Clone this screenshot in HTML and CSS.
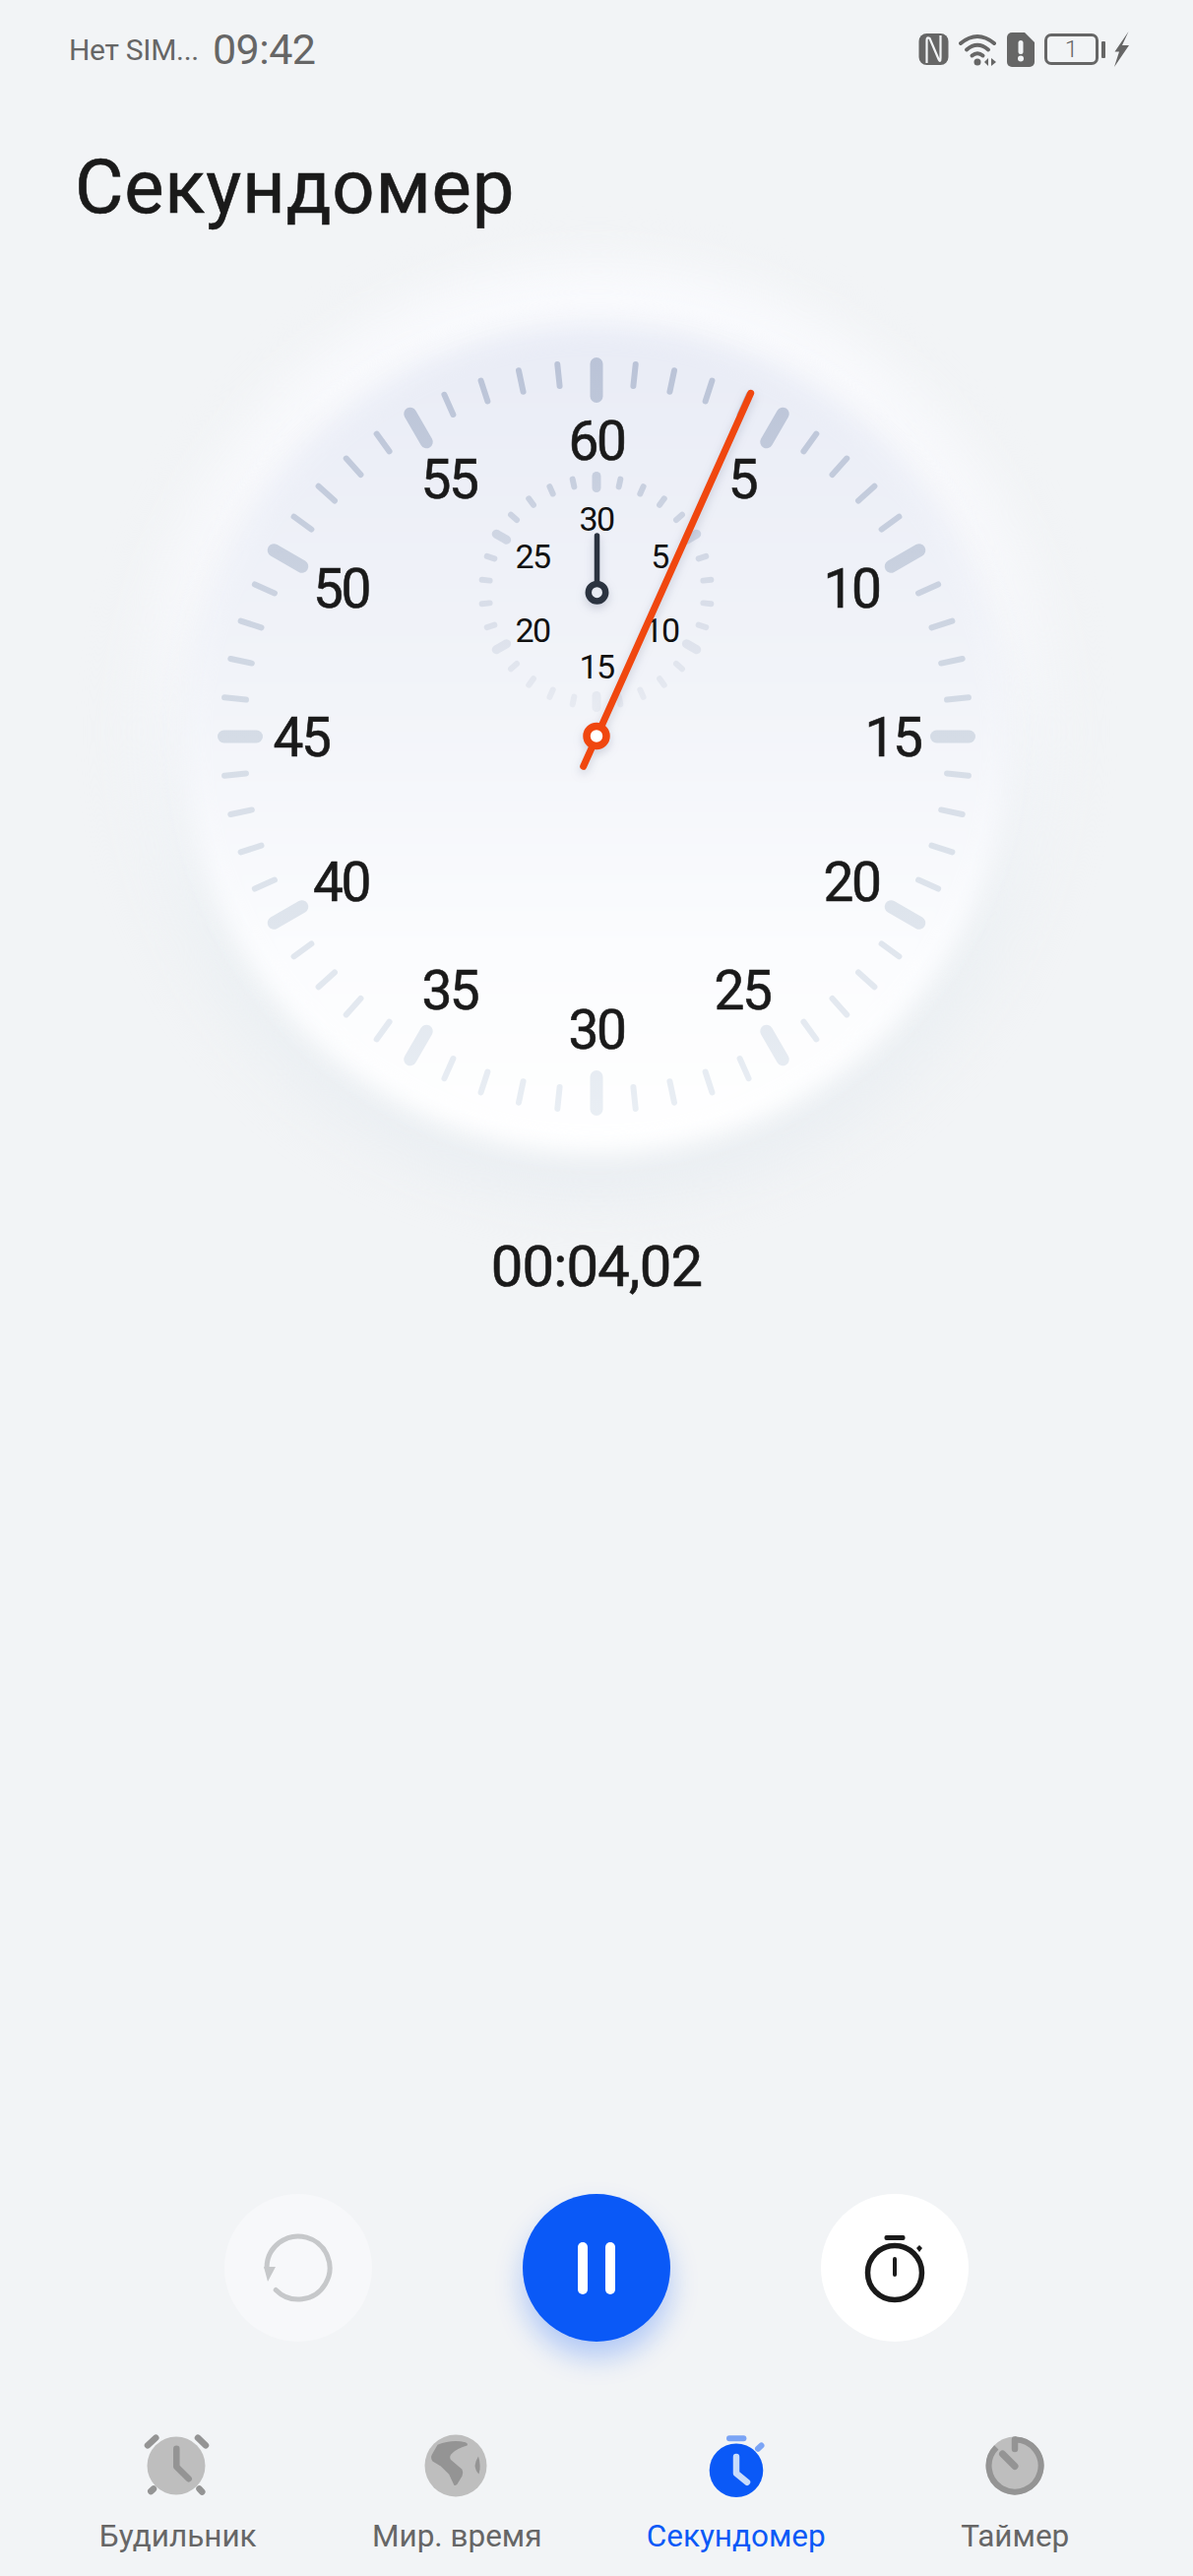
FILE: index.html
```html
<!DOCTYPE html>
<html lang="ru">
<head>
    <meta charset="UTF-8">
    <meta name="viewport" content="width=device-width, initial-scale=1.0">
    <title>Секундомер</title>
    <link rel="stylesheet" href="styles.css">
</head>
<body>
    <header class="status-bar">
        <div class="status-left">
            <span class="carrier">Нет SIM...</span>
            <span class="clock">09:42</span>
        </div>
        <div class="status-right">
            <svg class="icon-nfc" width="31" height="32" viewBox="0 0 30 32">
                <rect width="30" height="32" rx="8" fill="#666"/>
                <path d="M8 30V7Q8 3 11 5L20 26Q22 30 22 25V2" fill="none" stroke="#f2f4f6" stroke-width="2.200"/>
            </svg>
            <svg class="icon-wifi" width="39" height="33" viewBox="0 0 39 33">
                <g fill="none" stroke="#666" stroke-width="4" stroke-linecap="round">
                    <path d="M2 10Q19 -4 36 10"/>
                    <path d="M8 16.500Q19 7 30 16.500"/>
                    <path d="M13.500 22.500Q19 18 24.500 22.500"/>
                </g>
                <circle cx="19" cy="29" r="3.500" fill="#666"/>
                <path d="M26 29L30 25V33ZM33 25L38 29L33 33Z" fill="#666"/>
            </svg>
            <svg class="icon-sim" width="28" height="35" viewBox="0 0 28 35">
                <path d="M5 0H18L28 10V30A5 5 0 0 1 23 35H5A5 5 0 0 1 0 30V5A5 5 0 0 1 5 0Z" fill="#666"/>
                <rect x="11.500" y="8" width="5" height="14" rx="2.500" fill="#f2f4f6"/>
                <circle cx="14" cy="26.500" r="3" fill="#f2f4f6"/>
            </svg>
            <div class="battery">
                <div class="battery-body">1</div>
                <div class="battery-nub"></div>
            </div>
            <svg class="icon-bolt" width="15" height="36" viewBox="0 0 15 36">
                <path d="M14.500 0L8 14H15L0 36L5 20.500H0.500Z" fill="#666"/>
            </svg>
        </div>
    </header>

    <h1 class="page-title">Секундомер</h1>

    <section class="dial">
        <div class="dial-halo"></div>
        <div class="dial-disc"></div>
        <svg class="dial-face" width="840" height="840" viewBox="0 0 840 840">
            <defs>
                <linearGradient id="fade-outer" gradientUnits="userSpaceOnUse" x1="0" y1="35" x2="0" y2="807">
                    <stop offset="0" stop-color="#bac3d7"/>
                    <stop offset="0.5" stop-color="#d5dce6"/>
                    <stop offset="1" stop-color="#e9eef4"/>
                </linearGradient>
                <linearGradient id="fade-inner" gradientUnits="userSpaceOnUse" x1="0" y1="150" x2="0" y2="396">
                    <stop offset="0" stop-color="#c6cede"/>
                    <stop offset="1" stop-color="#e8ebf2"/>
                </linearGradient>
            </defs>

            <g id="ticks-outer" stroke="url(#fade-outer)" stroke-linecap="round"></g>
            <g id="ticks-inner" stroke="url(#fade-inner)" stroke-linecap="round"></g>

            <g class="num-big">
                <text x="420" y="138.500">60</text>
                <text x="568" y="178">5</text>
                <text x="679" y="288.500">10</text>
                <text x="721" y="439.500">15</text>
                <text x="679" y="587">20</text>
                <text x="568" y="697">25</text>
                <text x="420" y="736.500">30</text>
                <text x="270.800" y="697">35</text>
                <text x="160.500" y="587">40</text>
                <text x="120" y="439.500">45</text>
                <text x="160.500" y="288.500">50</text>
                <text x="270" y="178">55</text>
            </g>
            <g class="num-small">
                <text x="420" y="210.500">30</text>
                <text x="484" y="248.500">5</text>
                <text x="486" y="323.500">10</text>
                <text x="420" y="360.500">15</text>
                <text x="355" y="323.500">20</text>
                <text x="355" y="248.500">25</text>
            </g>

            <g class="hand-shadow">
                <line x1="420.500" y1="216" x2="420.500" y2="268" stroke="#2b3340" stroke-width="5.500" stroke-linecap="round"/>
                <circle cx="420.500" cy="273.700" r="8.700" fill="#e8ebf3" stroke="#2b3340" stroke-width="6.500"/>
            </g>
            <g class="hand-shadow">
                <line x1="406.700" y1="450.300" x2="576.700" y2="71.300" stroke="#f0470f" stroke-width="7" stroke-linecap="round"/>
                <circle cx="420" cy="419.500" r="10" fill="#fff" stroke="#f0470f" stroke-width="7.500"/>
            </g>
        </svg>
    </section>

    <div class="elapsed">00:04,02</div>

    <div class="controls">
        <button class="round-btn btn-reset" type="button">
            <svg width="80" height="80" viewBox="0 0 80 80">
                <path d="M17.200 62.500A32 32 0 1 0 8 40" fill="none" stroke="#c6c8ca" stroke-width="5" stroke-linecap="round"/>
                <path d="M5 39H17L9 54Z" fill="#c6c8ca"/>
            </svg>
        </button>
        <button class="round-btn btn-pause" type="button">
            <span class="pause-bar"></span>
            <span class="pause-bar"></span>
        </button>
        <button class="round-btn btn-lap" type="button">
            <svg width="80" height="80" viewBox="0 0 80 80">
                <circle cx="40" cy="45" r="27.500" fill="none" stroke="#1a1a1a" stroke-width="5.500"/>
                <rect x="29.500" y="7" width="21" height="5" rx="2" fill="#1a1a1a"/>
                <rect x="38" y="29" width="4" height="20" rx="2" fill="#1a1a1a"/>
                <path d="M65 17L68 20L65 24L62 20Z" fill="#1a1a1a"/>
            </svg>
        </button>
    </div>

    <nav class="tabs">
        <a class="tab">
            <svg width="72" height="72" viewBox="2 0 72 72">
                <circle cx="36" cy="36" r="29.500" fill="#bebebe"/>
                <g fill="none" stroke="#949494" stroke-width="6.500" stroke-linecap="round" stroke-linejoin="round">
                    <path d="M36.300 18.700V37L48.700 49.300"/>
                    <path d="M7 15.300L15.300 7.700"/>
                    <path d="M58 7.700L66 15.300"/>
                    <path d="M10.300 62L13 59.500"/>
                    <path d="M59.500 59.500L62.300 62.500"/>
                </g>
            </svg>
            <span>Будильник</span>
        </a>
        <a class="tab">
            <svg width="72" height="72" viewBox="1 0 72 72">
                <circle cx="36" cy="36" r="31.500" fill="#bebebe"/>
                <path d="M17.500 14.800Q32 9 45.800 12.200Q49 13.500 47.500 15.500Q38 18 32.500 23.200Q29 26 30.800 29.800L42.500 39.800Q44 43 42.500 46.500L37.500 54.800Q35 57 34.200 55.500L29.200 44.800L20.800 36.500L12.500 31.500Q10 28 11.800 24.800Z" fill="#949494"/>
                <path d="M59 26.500Q56 31 55.500 36Q56 41 59.500 44.500Q62 36 59 26.500Z" fill="#949494"/>
            </svg>
            <span>Мир. время</span>
        </a>
        <a class="tab tab-active">
            <svg width="72" height="72" viewBox="0 0 72 72">
                <circle cx="36" cy="40.700" r="27.300" fill="#0a59f7"/>
                <rect x="26" y="5.300" width="20.400" height="6" rx="3" fill="#7ba4f5"/>
                <path d="M58 18.700L61.500 15.500" fill="none" stroke="#7ba4f5" stroke-width="6" stroke-linecap="round"/>
                <path d="M36 27V43.700L47 52.700" fill="none" stroke="#c8dcfb" stroke-width="6.500" stroke-linecap="round" stroke-linejoin="round"/>
            </svg>
            <span>Секундомер</span>
        </a>
        <a class="tab">
            <svg width="72" height="72" viewBox="0 0 72 72">
                <circle cx="36" cy="36" r="29.500" fill="#bebebe"/>
                <path d="M36 9.500A26.500 26.500 0 1 1 17.300 17.300" fill="none" stroke="#949494" stroke-width="6"/>
                <path d="M36 9.500V19" fill="none" stroke="#949494" stroke-width="6.500" stroke-linecap="round"/>
                <path d="M23.500 24L36 36.500" fill="none" stroke="#949494" stroke-width="7" stroke-linecap="round"/>
            </svg>
            <span>Таймер</span>
        </a>
    </nav>

    <script src="dial.js"></script>
</body>
</html>
```

FILE: styles.css
```css
* {
    box-sizing: border-box;
}

html, body {
    margin: 0;
    padding: 0;
}

body {
    width: 1212px;
    height: 2616px;
    display: flex;
    flex-direction: column;
    overflow: hidden;
    background-color: #f2f4f6;
    color: #1a1a1a;
    font-family: Roboto, "Noto Sans", sans-serif;
}

/* status bar */
.status-bar {
    height: 100px;
    padding: 32px 65px 0 70px;
    display: flex;
    justify-content: space-between;
    align-items: flex-start;
    color: #666;
}

.status-left {
    display: flex;
    align-items: center;
    gap: 14px;
    height: 36px;
}

.carrier {
    font-size: 30px;
    letter-spacing: -0.3px;
}

.clock {
    font-size: 43px;
    letter-spacing: -0.5px;
}

.status-right {
    display: flex;
    align-items: center;
    gap: 10px;
    height: 36px;
}

.battery {
    display: flex;
    align-items: center;
    gap: 3px;
    margin-right: -1px;
}

.battery-body {
    width: 55px;
    height: 32px;
    border: 3px solid #666;
    border-radius: 7px;
    font-size: 24px;
    font-weight: 300;
    line-height: 26px;
    text-align: center;
}

.battery-nub {
    width: 4px;
    height: 17px;
    background-color: #666;
    border-radius: 1px;
}

/* title */
.page-title {
    height: 228px;
    margin: 0;
    padding: 45px 0 0 76px;
    font-size: 76px;
    font-weight: 400;
    line-height: 90px;
    letter-spacing: 0.8px;
    -webkit-text-stroke: 0.6px #1a1a1a;
}

/* dial */
.dial {
    position: relative;
    width: 840px;
    height: 840px;
    margin: 0 auto;
    flex-shrink: 0;
}

.dial-halo {
    position: absolute;
    inset: -62px -52px -52px;
    border-radius: 50%;
    background: linear-gradient(#f9fafd 0%, #f6f7fa 35%, #ecf0f3 75%, #eaeef2 100%);
    filter: blur(24px);
}

.dial-disc {
    position: absolute;
    inset: 2px 0 -4px;
    border-radius: 50%;
    background: linear-gradient(#e9ecf6 0%, #f2f4f9 45%, #fbfcfe 75%, #fff 100%);
    filter: blur(12px);
}

.dial-face {
    position: absolute;
    top: 0;
    left: 0;
}

.num-big text,
.num-small text {
    text-anchor: middle;
    fill: #1a1a1a;
}

.num-big text {
    font-size: 55px;
    letter-spacing: -2.500px;
    stroke: #1a1a1a;
    stroke-width: 0.6px;
}

.num-small text {
    font-size: 34px;
    letter-spacing: -1.500px;
    fill: #111;
}

.hand-shadow {
    filter: drop-shadow(0 4px 5px rgba(90, 100, 130, 0.25));
}

/* elapsed time */
.elapsed {
    margin-top: 83px;
    font-size: 58px;
    line-height: 70px;
    letter-spacing: -0.8px;
    text-align: center;
    -webkit-text-stroke: 0.6px #1a1a1a;
}

/* buttons */
.controls {
    margin-top: auto;
    padding-right: 1px;
    display: flex;
    justify-content: center;
    gap: 153px;
}

.round-btn {
    width: 150px;
    height: 150px;
    padding: 0;
    border: none;
    border-radius: 50%;
    display: flex;
    justify-content: center;
    align-items: center;
}

.btn-reset {
    background-color: #f7f8fa;
}

.btn-pause {
    gap: 18px;
    background-color: #0a59f7;
    box-shadow: 0 16px 28px rgba(10, 89, 247, 0.28);
}

.btn-lap {
    background-color: #fff;
}

.pause-bar {
    width: 10px;
    height: 53px;
    background-color: #fff;
    border-radius: 5px;
}

/* bottom tabs */
.tabs {
    height: 238px;
    padding: 90px 39px 0;
    display: grid;
    grid-template-columns: repeat(4, 1fr);
}

.tab {
    display: flex;
    flex-direction: column;
    align-items: center;
    color: #666;
    font-size: 31.500px;
    line-height: 40px;
}

.tab span {
    margin-top: 16px;
}

.tab-active {
    color: #0a59f7;
}
```

FILE: dial.js
```js
// draws the tick marks of both dials
function addTicks(groupId, cx, cy, count, every, major, minor) {
    var group = document.getElementById(groupId);
    for (var i = 0; i < count; i++) {
        var t = i % every === 0 ? major : minor;
        var a = i * 2 * Math.PI / count;
        var s = Math.sin(a);
        var c = Math.cos(a);
        var line = document.createElementNS("http://www.w3.org/2000/svg", "line");
        line.setAttribute("x1", (cx + t.from * s).toFixed(2));
        line.setAttribute("y1", (cy - t.from * c).toFixed(2));
        line.setAttribute("x2", (cx + t.to * s).toFixed(2));
        line.setAttribute("y2", (cy - t.to * c).toFixed(2));
        line.setAttribute("stroke-width", t.width);
        group.appendChild(line);
    }
}

addTicks("ticks-outer", 420, 420, 60, 5,
    { from: 378.5, to: 345.5, width: 13 },
    { from: 380, to: 358, width: 6 });

addTicks("ticks-inner", 420, 273, 30, 5,
    { from: 117.5, to: 105.5, width: 9 },
    { from: 117, to: 109, width: 6 });
```
